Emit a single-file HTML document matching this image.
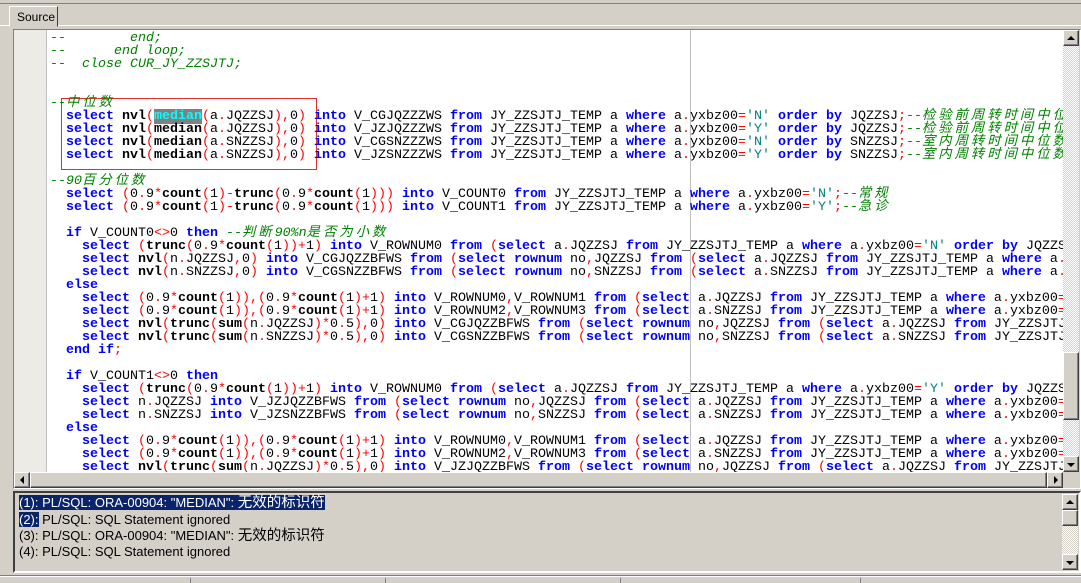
<!DOCTYPE html>
<html><head><meta charset="utf-8"><style>
*{margin:0;padding:0;box-sizing:border-box}
body{width:1081px;height:583px;background:#d4d0c8;position:relative;overflow:hidden;font-family:"Liberation Sans","Noto Sans CJK SC",sans-serif}
.abs{position:absolute}
pre{position:absolute;left:50px;top:30px;font-family:"Liberation Mono","Noto Sans CJK SC",monospace;font-size:13.33px;line-height:13px;color:#000;white-space:pre}
pre i{color:#0000ff;font-weight:bold;font-style:normal}
pre b{font-weight:bold}
pre u{color:#ff0000;text-decoration:none}
pre s{color:#008080;text-decoration:none}
pre em{color:#008000;font-style:italic}
.z{letter-spacing:3px}
.h{background:#808080;color:#00ffff}
.btn{position:absolute;background:#d4d0c8;border:1px solid;border-color:#fff #404040 #404040 #fff;box-shadow:inset -1px -1px #808080}
.chk{background-color:#e8e6e0;background-image:repeating-conic-gradient(#fff 0 25%,#d4d0c8 0 50%);background-size:2px 2px}
.msg{position:absolute;left:19px;font-size:13px;line-height:16px;color:#000;font-family:"Liberation Sans","Noto Sans CJK SC",sans-serif;white-space:pre}
.msg .c{font-size:14.5px}
.sel{background:#0a246a;color:#fff}
</style></head><body>
<div class="abs" style="left:0;top:0;width:1081px;height:4px;border-bottom:1px solid #808080"></div>
<div class="abs" style="left:9px;top:6px;width:49px;height:21px;border:1px solid;border-color:#fff #404040 #d4d0c8 #fff;font-size:12px;padding:3px 0 0 7px">Source</div>
<div class="abs" style="left:58px;top:25px;width:1023px;height:1px;background:#fff"></div>
<div class="abs" style="left:0;top:25px;width:9px;height:1px;background:#fff"></div>
<!-- editor -->
<div class="abs" style="left:13px;top:29px;width:1068px;height:460px;border:1px solid;border-color:#808080 #fff #fff #808080"></div>
<div class="abs" style="left:14px;top:30px;width:33px;height:442px;background:#ecebe6;border-right:1px solid #c0c0c0"></div>
<div class="abs" style="left:47px;top:30px;width:1016px;height:442px;background:#fff;overflow:hidden">
<div class="abs" style="left:643px;top:0;width:1px;height:442px;background:#c0c0c0"></div>
<div class="abs" style="left:14px;top:68px;width:256px;height:72px;border:1px solid #e03030"></div>
<pre style="left:3px;top:2px"><em>--        end;</em>
<em>--      end loop;</em>
<em>--  close CUR_JY_ZZSJTJ;</em>


<em>--<span class="z">中位数</span></em>
  <i>select</i> <b>nvl</b><u>(</u><b class="h">median</b><u>(</u>a<u>.</u>JQZZSJ<u>),</u>0<u>)</u> <i>into</i> V_CGJQZZZWS <i>from</i> JY_ZZSJTJ_TEMP a <i>where</i> a<u>.</u>yxbz00<u>=</u><s>'N'</s> <i>order by</i> JQZZSJ<u>;</u><em>--<span class="z">检验前周转时间中位数</span></em>
  <i>select</i> <b>nvl</b><u>(</u><b>median</b><u>(</u>a<u>.</u>JQZZSJ<u>),</u>0<u>)</u> <i>into</i> V_JZJQZZZWS <i>from</i> JY_ZZSJTJ_TEMP a <i>where</i> a<u>.</u>yxbz00<u>=</u><s>'Y'</s> <i>order by</i> JQZZSJ<u>;</u><em>--<span class="z">检验前周转时间中位数</span></em>
  <i>select</i> <b>nvl</b><u>(</u><b>median</b><u>(</u>a<u>.</u>SNZZSJ<u>),</u>0<u>)</u> <i>into</i> V_CGSNZZZWS <i>from</i> JY_ZZSJTJ_TEMP a <i>where</i> a<u>.</u>yxbz00<u>=</u><s>'N'</s> <i>order by</i> SNZZSJ<u>;</u><em>--<span class="z">室内周转时间中位数</span></em>
  <i>select</i> <b>nvl</b><u>(</u><b>median</b><u>(</u>a<u>.</u>SNZZSJ<u>),</u>0<u>)</u> <i>into</i> V_JZSNZZZWS <i>from</i> JY_ZZSJTJ_TEMP a <i>where</i> a<u>.</u>yxbz00<u>=</u><s>'Y'</s> <i>order by</i> SNZZSJ<u>;</u><em>--<span class="z">室内周转时间中位数</span></em>

<em>--90<span class="z">百分位数</span></em>
  <i>select</i> <u>(</u>0<u>.</u>9<u>*</u><b>count</b><u>(</u>1<u>)-</u><b>trunc</b><u>(</u>0<u>.</u>9<u>*</u><b>count</b><u>(</u>1<u>)))</u> <i>into</i> V_COUNT0 <i>from</i> JY_ZZSJTJ_TEMP a <i>where</i> a<u>.</u>yxbz00<u>=</u><s>'N'</s><u>;</u><em>--<span class="z">常规</span></em>
  <i>select</i> <u>(</u>0<u>.</u>9<u>*</u><b>count</b><u>(</u>1<u>)-</u><b>trunc</b><u>(</u>0<u>.</u>9<u>*</u><b>count</b><u>(</u>1<u>)))</u> <i>into</i> V_COUNT1 <i>from</i> JY_ZZSJTJ_TEMP a <i>where</i> a<u>.</u>yxbz00<u>=</u><s>'Y'</s><u>;</u><em>--<span class="z">急诊</span></em>

  <i>if</i> V_COUNT0<u>&lt;&gt;</u>0 <i>then</i> <em>--<span class="z">判断</span>90%n<span class="z">是否为小数</span></em>
    <i>select</i> <u>(</u><b>trunc</b><u>(</u>0<u>.</u>9<u>*</u><b>count</b><u>(</u>1<u>))+</u>1<u>)</u> <i>into</i> V_ROWNUM0 <i>from</i> <u>(</u><i>select</i> a<u>.</u>JQZZSJ <i>from</i> JY_ZZSJTJ_TEMP a <i>where</i> a<u>.</u>yxbz00<u>=</u><s>'N'</s> <i>order by</i> JQZZSJ
    <i>select</i> <b>nvl</b><u>(</u>n<u>.</u>JQZZSJ<u>,</u>0<u>)</u> <i>into</i> V_CGJQZZBFWS <i>from</i> <u>(</u><i>select rownum</i> no<u>,</u>JQZZSJ <i>from</i> <u>(</u><i>select</i> a<u>.</u>JQZZSJ <i>from</i> JY_ZZSJTJ_TEMP a <i>where</i> a<u>.</u>
    <i>select</i> <b>nvl</b><u>(</u>n<u>.</u>SNZZSJ<u>,</u>0<u>)</u> <i>into</i> V_CGSNZZBFWS <i>from</i> <u>(</u><i>select rownum</i> no<u>,</u>SNZZSJ <i>from</i> <u>(</u><i>select</i> a<u>.</u>SNZZSJ <i>from</i> JY_ZZSJTJ_TEMP a <i>where</i> a<u>.</u>
  <i>else</i>
    <i>select</i> <u>(</u>0<u>.</u>9<u>*</u><b>count</b><u>(</u>1<u>)),(</u>0<u>.</u>9<u>*</u><b>count</b><u>(</u>1<u>)+</u>1<u>)</u> <i>into</i> V_ROWNUM0<u>,</u>V_ROWNUM1 <i>from</i> <u>(</u><i>select</i> a<u>.</u>JQZZSJ <i>from</i> JY_ZZSJTJ_TEMP a <i>where</i> a<u>.</u>yxbz00<u>=</u>
    <i>select</i> <u>(</u>0<u>.</u>9<u>*</u><b>count</b><u>(</u>1<u>)),(</u>0<u>.</u>9<u>*</u><b>count</b><u>(</u>1<u>)+</u>1<u>)</u> <i>into</i> V_ROWNUM2<u>,</u>V_ROWNUM3 <i>from</i> <u>(</u><i>select</i> a<u>.</u>SNZZSJ <i>from</i> JY_ZZSJTJ_TEMP a <i>where</i> a<u>.</u>yxbz00<u>=</u>
    <i>select</i> <b>nvl</b><u>(</u><b>trunc</b><u>(</u><b>sum</b><u>(</u>n<u>.</u>JQZZSJ<u>)*</u>0<u>.</u>5<u>),</u>0<u>)</u> <i>into</i> V_CGJQZZBFWS <i>from</i> <u>(</u><i>select rownum</i> no<u>,</u>JQZZSJ <i>from</i> <u>(</u><i>select</i> a<u>.</u>JQZZSJ <i>from</i> JY_ZZSJTJ
    <i>select</i> <b>nvl</b><u>(</u><b>trunc</b><u>(</u><b>sum</b><u>(</u>n<u>.</u>SNZZSJ<u>)*</u>0<u>.</u>5<u>),</u>0<u>)</u> <i>into</i> V_CGSNZZBFWS <i>from</i> <u>(</u><i>select rownum</i> no<u>,</u>SNZZSJ <i>from</i> <u>(</u><i>select</i> a<u>.</u>SNZZSJ <i>from</i> JY_ZZSJTJ
  <i>end if</i><u>;</u>

  <i>if</i> V_COUNT1<u>&lt;&gt;</u>0 <i>then</i>
    <i>select</i> <u>(</u><b>trunc</b><u>(</u>0<u>.</u>9<u>*</u><b>count</b><u>(</u>1<u>))+</u>1<u>)</u> <i>into</i> V_ROWNUM0 <i>from</i> <u>(</u><i>select</i> a<u>.</u>JQZZSJ <i>from</i> JY_ZZSJTJ_TEMP a <i>where</i> a<u>.</u>yxbz00<u>=</u><s>'Y'</s> <i>order by</i> JQZZS
    <i>select</i> n<u>.</u>JQZZSJ <i>into</i> V_JZJQZZBFWS <i>from</i> <u>(</u><i>select rownum</i> no<u>,</u>JQZZSJ <i>from</i> <u>(</u><i>select</i> a<u>.</u>JQZZSJ <i>from</i> JY_ZZSJTJ_TEMP a <i>where</i> a<u>.</u>yxbz00<u>=</u>
    <i>select</i> n<u>.</u>SNZZSJ <i>into</i> V_JZSNZZBFWS <i>from</i> <u>(</u><i>select rownum</i> no<u>,</u>SNZZSJ <i>from</i> <u>(</u><i>select</i> a<u>.</u>SNZZSJ <i>from</i> JY_ZZSJTJ_TEMP a <i>where</i> a<u>.</u>yxbz00<u>=</u>
  <i>else</i>
    <i>select</i> <u>(</u>0<u>.</u>9<u>*</u><b>count</b><u>(</u>1<u>)),(</u>0<u>.</u>9<u>*</u><b>count</b><u>(</u>1<u>)+</u>1<u>)</u> <i>into</i> V_ROWNUM0<u>,</u>V_ROWNUM1 <i>from</i> <u>(</u><i>select</i> a<u>.</u>JQZZSJ <i>from</i> JY_ZZSJTJ_TEMP a <i>where</i> a<u>.</u>yxbz00<u>=</u>
    <i>select</i> <u>(</u>0<u>.</u>9<u>*</u><b>count</b><u>(</u>1<u>)),(</u>0<u>.</u>9<u>*</u><b>count</b><u>(</u>1<u>)+</u>1<u>)</u> <i>into</i> V_ROWNUM2<u>,</u>V_ROWNUM3 <i>from</i> <u>(</u><i>select</i> a<u>.</u>SNZZSJ <i>from</i> JY_ZZSJTJ_TEMP a <i>where</i> a<u>.</u>yxbz00<u>=</u>
    <i>select</i> <b>nvl</b><u>(</u><b>trunc</b><u>(</u><b>sum</b><u>(</u>n<u>.</u>JQZZSJ<u>)*</u>0<u>.</u>5<u>),</u>0<u>)</u> <i>into</i> V_JZJQZZBFWS <i>from</i> <u>(</u><i>select rownum</i> no<u>,</u>JQZZSJ <i>from</i> <u>(</u><i>select</i> a<u>.</u>JQZZSJ <i>from</i> JY_ZZSJTJ</pre>
</div>
<!-- vertical scrollbar -->
<div class="abs chk" style="left:1063px;top:30px;width:16px;height:442px"></div>
<div class="btn" style="left:1063px;top:30px;width:16px;height:16px"><div class="abs" style="left:3px;top:5px;border:4px solid transparent;border-bottom:4px solid #000;border-top:0"></div></div>
<div class="btn" style="left:1063px;top:352px;width:16px;height:68px"></div>
<div class="btn" style="left:1063px;top:456px;width:16px;height:16px"><div class="abs" style="left:3px;top:6px;border:4px solid transparent;border-top:4px solid #000;border-bottom:0"></div></div>
<!-- horizontal scrollbar -->
<div class="abs chk" style="left:14px;top:472px;width:1049px;height:16px"></div>
<div class="btn" style="left:14px;top:472px;width:16px;height:16px"><div class="abs" style="left:5px;top:3px;border:4px solid transparent;border-right:4px solid #000;border-left:0"></div></div>
<div class="btn" style="left:30px;top:472px;width:1017px;height:16px"></div>
<div class="btn" style="left:1047px;top:472px;width:16px;height:16px"><div class="abs" style="left:6px;top:3px;border:4px solid transparent;border-left:4px solid #000;border-right:0"></div></div>
<!-- message panel -->
<div class="abs" style="left:13px;top:491px;width:1068px;height:82px;border:2px solid;border-color:#404040 #fff #fff #404040"></div>
<div class="abs chk" style="left:1062px;top:494px;width:16px;height:76px"></div>
<div class="btn" style="left:1062px;top:494px;width:16px;height:16px"><div class="abs" style="left:3px;top:5px;border:4px solid transparent;border-bottom:4px solid #000;border-top:0"></div></div>
<div class="btn" style="left:1062px;top:510px;width:16px;height:16px"></div>
<div class="btn" style="left:1062px;top:554px;width:16px;height:16px"><div class="abs" style="left:3px;top:6px;border:4px solid transparent;border-top:4px solid #000;border-bottom:0"></div></div>
<div class="msg" style="top:495px"><span class="sel">(1): PL/SQL: ORA-00904: "MEDIAN": <span class="c">无效的标识符</span></span></div>
<div class="msg" style="top:512px"><span class="sel">(2):</span> PL/SQL: SQL Statement ignored</div>
<div class="msg" style="top:528px">(3): PL/SQL: ORA-00904: "MEDIAN": <span class="c">无效的标识符</span></div>
<div class="msg" style="top:544px">(4): PL/SQL: SQL Statement ignored</div>
<!-- status bar -->
<div class="abs" style="left:0;top:575px;width:1081px;height:1px;background:#808080"></div>
<div class="abs" style="left:0;top:576px;width:1081px;height:1px;background:#fff"></div>
<div class="abs" style="left:190px;top:578px;width:1px;height:5px;background:#808080"></div>
<div class="abs" style="left:385px;top:578px;width:1px;height:5px;background:#808080"></div>
<div class="abs" style="left:620px;top:578px;width:1px;height:5px;background:#808080"></div>
<div class="abs" style="left:860px;top:578px;width:1px;height:5px;background:#808080"></div>
</body></html>
